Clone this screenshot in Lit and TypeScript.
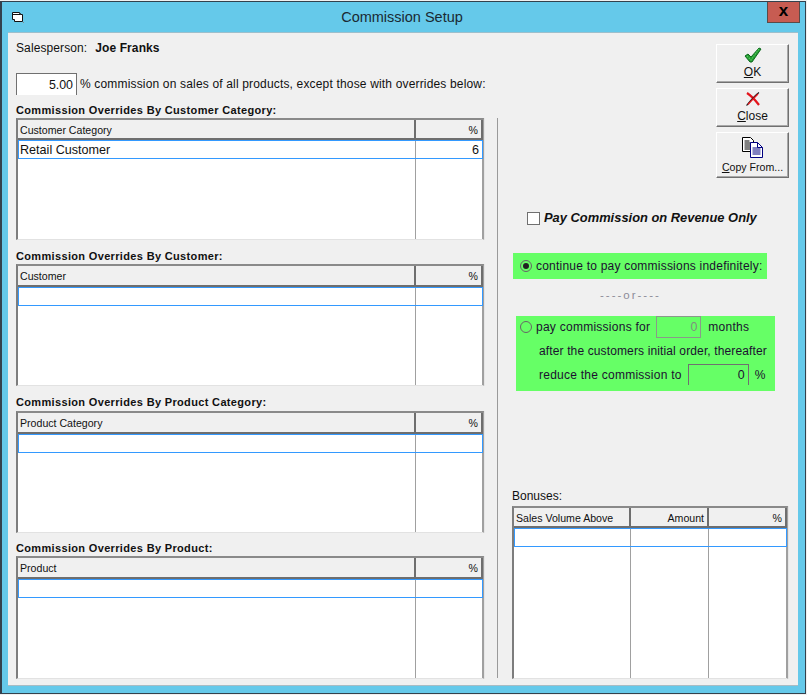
import { LitElement, html, css, svg } from "lit";
import { customElement, property } from "lit/decorators.js";

interface Col { label: string; width: number; align?: string; value?: string; }

@customElement("data-grid")
class DataGrid extends LitElement {
  @property({ attribute: false }) columns: Col[] = [];
  @property({ type: Number }) boxHeight = 122;
  @property({ type: Number }) headHeight = 21;
  static styles = css`
    :host { display: block; }
    .box { position: relative; display: flex; box-sizing: border-box; background: #fff;
      border-top: 2px solid #8a8a8a; border-left: 2px solid #7d7d7d; border-right: 1px solid #a0a0a0;
      border-bottom: 1px solid #e2e2e2; box-shadow: 1px 0 0 #e6e6e6; }
    .col { display: flex; flex-direction: column; box-sizing: border-box; border-right: 1px solid #a0a0a0; }
    .col:last-of-type { border-right: none; }
    .head { box-sizing: border-box; background: #f0f0f0; border-bottom: 2px solid #6e6e6e; border-right: 2px solid #6e6e6e;
      margin-right: -1px; display: flex; align-items: center; padding: 1px 2px 0 2px;
      font: 10.6px/12px "Liberation Sans", Arial, sans-serif; color: #111; white-space: nowrap; }
    .col:last-of-type .head { margin-right: 0; }
    .head.right { justify-content: flex-end; padding-right: 3px; }
    .cell { box-sizing: border-box; height: 19px; padding: 0 2px 0 2px; display: flex; align-items: center;
      font: 12.6px/14px "Liberation Sans", Arial, sans-serif; color: #111; white-space: nowrap; }
    .cell.right { justify-content: flex-end; padding-right: 3px; }
    .sel { position: absolute; left: 0; right: 0; height: 19px; box-sizing: border-box; border: 1px solid #3399ff; pointer-events: none; }
  `;
  render() {
    return html`<div class="box" style="height:${this.boxHeight}px">
      ${this.columns.map((c) => html`<div class="col" style="width:${c.width}px">
        <div class="head ${c.align === "right" ? "right" : ""}" style="height:${this.headHeight}px">${c.label}</div>
        <div class="cell ${c.align === "right" ? "right" : ""}">${c.value ?? ""}</div>
      </div>`)}
      <div class="sel" style="top:${this.headHeight}px"></div>
    </div>`;
  }
}

@customElement("tool-button")
class ToolButton extends LitElement {
  @property({ type: Number }) h = 39;
  @property({ type: Number }) pad = 2;
  static styles = css`
    :host { display: block; }
    button { display: flex; flex-direction: column; align-items: center; justify-content: flex-start; width: 73px; padding: 0; box-sizing: border-box;
      background: #f0f0f0; border: 1px solid; border-color: #fff #707070 #707070 #fff;
      box-shadow: inset -1px -1px 0 #a8a8a8; color: #111; font-family: "Liberation Sans", Arial, sans-serif; }
  `;
  render() {
    return html`<button style="height:${this.h}px;padding-top:${this.pad}px"><slot></slot></button>`;
  }
}

const check = svg`<svg width="18" height="16" viewBox="0 0 18 16"><path d="M1 9l3-2 3 3 8-9 2 1-9 13h-2z" fill="#1f9a2e" stroke="#0f6a1f" stroke-width="1"/><path d="M3 9l4 4 8-11" fill="none" stroke="#57c85f" stroke-width="1.2" stroke-dasharray="1.5 1"/></svg>`;
const cross = svg`<svg width="16" height="14" viewBox="0 0 16 14"><path d="M2 1c3 2 9 8 12 12" fill="none" stroke="#e3141c" stroke-width="2.2"/><path d="M14 0.5C10 3 6 8 1.5 13.5" fill="none" stroke="#1a1a1a" stroke-width="1.2"/><path d="M13 2C10 5 6 9 3 12.5" fill="none" stroke="#e3141c" stroke-width="1.3"/></svg>`;
const copy = svg`<svg width="22" height="21" viewBox="0 0 22 21"><path d="M.5.5h8l3 3v11h-11z" fill="#fff" stroke="#000"/><path d="M2.500 4h5M2.500 6h7M2.500 8h7M2.500 10h7M2.500 12h7" stroke="#000"/><path d="M8.500 5.500h7l5 5v10h-12z" fill="#fff" stroke="#000080"/><path d="M15.500 5.500v5h5" fill="none" stroke="#000080"/><path d="M10.500 11h8M10.500 13h8M10.500 15h8M10.500 17h8" stroke="#000080"/></svg>`;
const winIcon = svg`<svg class="ic" width="13" height="12" viewBox="0 0 13 12"><path d="M1.500 1.500h7v1h1v1h2v7h-8v-2h-2z" fill="#fff" stroke="#111"/><path d="M1.500 3.500h8" stroke="#111"/><path d="M12 11.500h1" stroke="#888"/></svg>`;

@customElement("app-root")
class AppRoot extends LitElement {
  static styles = css`
    :host { display: block; width: 807px; height: 695px; background: #f0f0f0; font-family: "Liberation Sans", Arial, sans-serif; color: #111; overflow: hidden; }
    .win { box-sizing: border-box; width: 806px; height: 693px; margin-top: 1px; background: #65c9ea;
      border: 1px solid #33414d; border-left-width: 2px; display: flex; flex-direction: column; }
    .title { position: relative; height: 30px; flex: none; display: flex; align-items: center; justify-content: center; font-size: 14.5px; color: #1a2a33; padding: 0 3px 1px 0; box-sizing: border-box; }
    .title .ic { position: absolute; left: 9px; top: 9px; }
    .x { position: absolute; top: 0; right: 5px; width: 33px; height: 21px; background: #c75c52; border: 1px solid #5a4a48; border-top: none; box-sizing: border-box; padding-bottom: 3px;
      display: flex; align-items: center; justify-content: center; font: bold 17px/14px "Liberation Sans", Arial, sans-serif; color: #000; }
    .client { margin: 0 7px 0 6px; height: 654px; box-sizing: border-box; background: #f0f0f0; display: flex; align-items: stretch;
      border-top: 1px solid #9dbfcc; border-bottom: 1px solid #a8bcc4; padding: 0 0 6px 8px; }
    .left { width: 468px; flex: none; display: flex; flex-direction: column; }
    .sp { margin-top: 8px; height: 14px; font-size: 12px; letter-spacing: .1px; line-height: 14px; display: flex; gap: 8px; }
    .sp b { font-weight: bold; }
    .pct { margin-top: 18px; height: 22px; display: flex; align-items: center; font-size: 12px; letter-spacing: .167px; gap: 3px; white-space: nowrap; }
    .pct .inp { width: 61px; flex: none; }
    .inp { box-sizing: border-box; background: #fff; border-top: 1px solid #707070; border-left: 1px solid #707070; border-right: 1px solid #707070; height: 22px; display: flex; align-items: center; justify-content: flex-end; padding-right: 3px; font-size: 12.4px; letter-spacing: 0; }
    h3 { margin: 9px 0 0; font: bold 11px/14px "Liberation Sans", Arial, sans-serif; letter-spacing: .34px; height: 15px; }
    h3.first { margin-top: 8px; }
    h3.wide { margin-top: 9px; height: 16px; }
    h3.tight { margin-top: 8px; }
    .divider { width: 1px; flex: none; background: #9a9a9a; margin: 85px 0 1px 13px; }
    .right { margin-left: 14px; flex: 1; display: flex; flex-direction: column; min-width: 0; }
    .btns { display: flex; flex-direction: column; align-items: flex-end; gap: 5px; margin: 11px 9px 0 0; }
    .lbl { font-size: 12px; line-height: 14px; margin-top: 2px; }
    .lbl.c { margin-top: 3px; }
    .lbl.small { font-size: 10.6px; line-height: 13px; margin-top: 3px; }
    .chk { display: flex; align-items: center; gap: 4px; margin: 32px 0 0 15px; font: italic bold 12.9px/16px "Liberation Sans", Arial, sans-serif; }
    .box { width: 13px; height: 13px; box-sizing: border-box; background: #fff; border: 1px solid #707070; flex: none; }
    .g { background: #66ff66; color: #1c1030; font-size: 12px; }
    .g1 { margin: 27px 0 0 1px; width: 254px; height: 26px; display: flex; align-items: center; gap: 4px; padding-left: 7px; box-sizing: border-box; letter-spacing: .22px; }
    .radio { width: 12px; height: 12px; border-radius: 50%; border: 1px solid #666; box-sizing: border-box; display: flex; align-items: center; justify-content: center; flex: none; }
    .radio i { width: 6px; height: 6px; border-radius: 50%; background: #222; }
    .or { margin: 10px 0 0 88px; height: 12px; line-height: 12px; font-size: 11.5px; color: #8c8c98; letter-spacing: 2px; }
    .g2 { margin: 15px 0 0 4px; width: 259px; height: 75px; box-sizing: border-box; display: flex; flex-direction: column; padding: 0 0 0 4px; }
    .g2 .r { display: flex; align-items: center; white-space: nowrap; }
    .g2 .r1 { height: 22px; gap: 4px; letter-spacing: .26px; }
    .g2 .r2 { height: 26px; padding: 0 0 0 19px; letter-spacing: .13px; }
    .g2 .r3 { height: 21px; padding-left: 19px; letter-spacing: .25px; }
    .g .inp { background: #66ff66; height: 22px; }
    .g .m { width: 45px; margin: 0 3px 0 2px; border: 1px solid #8a9a8a; color: #7f8f7f; }
    .g .m2 { width: 61px; margin: 0 6px 0 6px; height: 21px; }
    .bon { margin-top: auto; }
    .bon .t { font-size: 12px; line-height: 14px; height: 17px; }
    .bon data-grid { width: 276px; }
  `;

  render() {
    const ov = (label: string, value = "", pct = "") => [
      { label, width: 398, value },
      { label: "%", width: 67, align: "right", value: pct },
    ];
    return html`<div class="win">
      <div class="title">${winIcon}<span>Commission Setup</span><div class="x">x</div></div>
      <div class="client">
        <div class="left">
          <div class="sp"><span>Salesperson:</span><b>Joe Franks</b></div>
          <div class="pct"><div class="inp">5.00</div><span>% commission on sales of all products, except those with overrides below:</span></div>
          <h3 class="first">Commission Overrides By Customer Category:</h3>
          <data-grid .columns=${ov("Customer Category", "Retail Customer", "6")} .boxHeight=${122} .headHeight=${20}></data-grid>
          <h3>Commission Overrides By Customer:</h3>
          <data-grid .columns=${ov("Customer")}></data-grid>
          <h3 class="wide">Commission Overrides By Product Category:</h3>
          <data-grid .columns=${ov("Product Category")}></data-grid>
          <h3 class="tight">Commission Overrides By Product:</h3>
          <data-grid .columns=${ov("Product")} .boxHeight=${123}></data-grid>
        </div>
        <div class="divider"></div>
        <div class="right">
          <div class="btns">
            <tool-button .h=${39} .pad=${2}>${check}<span class="lbl"><u>O</u>K</span></tool-button>
            <tool-button .h=${39} .pad=${3}>${cross}<span class="lbl c"><u>C</u>lose</span></tool-button>
            <tool-button .h=${46} .pad=${4}>${copy}<span class="lbl small"><u>C</u>opy From...</span></tool-button>
          </div>
          <div class="chk"><span class="box"></span><span>Pay Commission on Revenue Only</span></div>
          <div class="g g1"><span class="radio"><i></i></span><span>continue to pay commissions indefinitely:</span></div>
          <div class="or">----or----</div>
          <div class="g g2">
            <div class="r r1"><span class="radio"></span><span>pay commissions for</span><div class="inp m">0</div><span>months</span></div>
            <div class="r r2">after the customers initial order, thereafter</div>
            <div class="r r3"><span>reduce the commission to</span><div class="inp m2">0</div><span>%</span></div>
          </div>
          <div class="bon">
            <div class="t">Bonuses:</div>
            <data-grid .columns=${[
              { label: "Sales Volume Above", width: 117 },
              { label: "Amount", width: 78, align: "right" },
              { label: "%", width: 78, align: "right" },
            ]} .boxHeight=${173} .headHeight=${20}></data-grid>
          </div>
        </div>
      </div>
    </div>`;
  }
}
